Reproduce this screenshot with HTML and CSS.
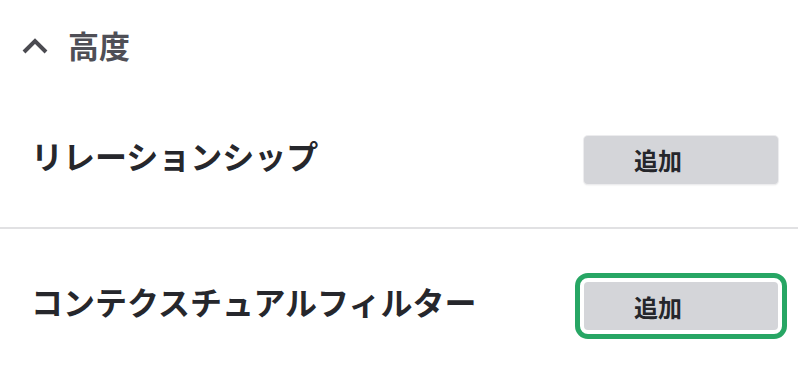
FILE: index.html
```html
<!DOCTYPE html>
<html lang="ja">
<head>
    <meta charset="UTF-8">
    <meta name="viewport" content="width=device-width, initial-scale=1.0">
    <title>高度</title>
    <link rel="stylesheet" href="styles.css">
</head>
<body>
    <div class="panel">
        <!-- 見出し -->
        <div class="section-head">
            <svg class="chevron" width="28" height="18" viewBox="0 0 28 18">
                <path d="M3 15 L14 4 L25 15" fill="none" stroke="#4b4b51" stroke-width="4"/>
            </svg>
            <span class="section-title">高度</span>
        </div>

        <div class="row">
            <span class="row-label">リレーションシップ</span>
            <button type="button" class="add-btn">追加</button>
        </div>

        <div class="row row-border">
            <span class="row-label">コンテクスチュアルフィルター</span>
            <button type="button" class="add-btn focused">追加</button>
        </div>
    </div>
</body>
</html>
```

FILE: styles.css
```css
body {
    margin: 0;
    padding: 0;
    background-color: #ffffff;
    font-family: "Noto Sans CJK JP", "Noto Sans", sans-serif;
    overflow: hidden;
}
.panel {
    width: 798px;
}
.section-head {
    display: flex;
    align-items: center;
    height: 92px;
    padding-left: 21px;
    box-sizing: border-box;
}
.chevron {
    display: block;
    margin-right: 19px;
    margin-top: -1px;
}
.section-title {
    font-size: 31px;
    font-weight: 700;
    color: #4f4f56;
    line-height: 1;
    padding-bottom: 4px;
}
.row {
    display: flex;
    align-items: center;
    justify-content: space-between;
    height: 135px;
    padding: 0 20px 0 31px;
    box-sizing: border-box;
}
.row-border {
    border-top: 2px solid #e1e1e3;
    height: 158px;
    padding-bottom: 2px;
}
.row-label {
    font-size: 32px;
    font-weight: 700;
    color: #26272c;
    line-height: 1;
    padding-bottom: 10px;
}
.add-btn {
    width: 194px;
    height: 48px;
    padding: 0 0 0 50px;
    text-align: left;
    font-family: "Noto Sans CJK JP", "Noto Sans", sans-serif;
    font-size: 24px;
    font-weight: 700;
    color: #25262b;
    background-color: #d4d5d9;
    border: none;
    border-radius: 4px;
    box-shadow: 0 0 0 1px #ececee, 0 1px 2px rgba(0, 0, 0, 0.12);
    cursor: pointer;
}
.add-btn.focused {
    box-shadow: none;
    outline: 5px solid #27a664;
    outline-offset: 4px;
}
```
